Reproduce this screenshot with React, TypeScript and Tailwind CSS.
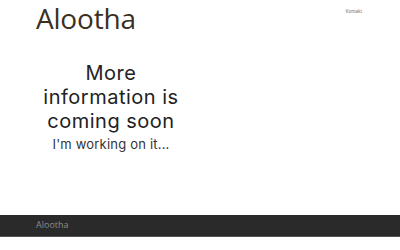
export default function App() {
  return (
    <div className="w-[400px] bg-white" style={{ fontFamily: '"Open Sans", sans-serif' }}>
      <header className="flex h-[40px] items-start justify-between pl-[36px] pr-[38px]">
        <h1 className="text-[28px] leading-[36px] tracking-[-0.2px] text-[#3b2f1f]">Alootha</h1>
        <nav className="pt-[8px] text-[4.5px] leading-[6px] text-[#666]">Kontakt</nav>
      </header>

      <main className="h-[175px] pl-[36px] pt-[21px]">
        <div className="w-[150px] text-center" style={{ fontFamily: 'Inter, sans-serif' }}>
          <h2 className="text-[20px] leading-[24px] tracking-[0.5px] text-[#222]">
            More information is coming soon
          </h2>
          <p className="mt-[1px] text-[13px] leading-[20px] tracking-[0.2px] text-[#333]">I'm working on it...</p>
        </div>
      </main>

      <footer className="h-[22px] border-b border-[#555] bg-[#2a2a2a] pl-[36px]">
        <span className="block text-[9px] leading-[20px] text-[#8c8c8c]">Alootha</span>
      </footer>
    </div>
  )
}
